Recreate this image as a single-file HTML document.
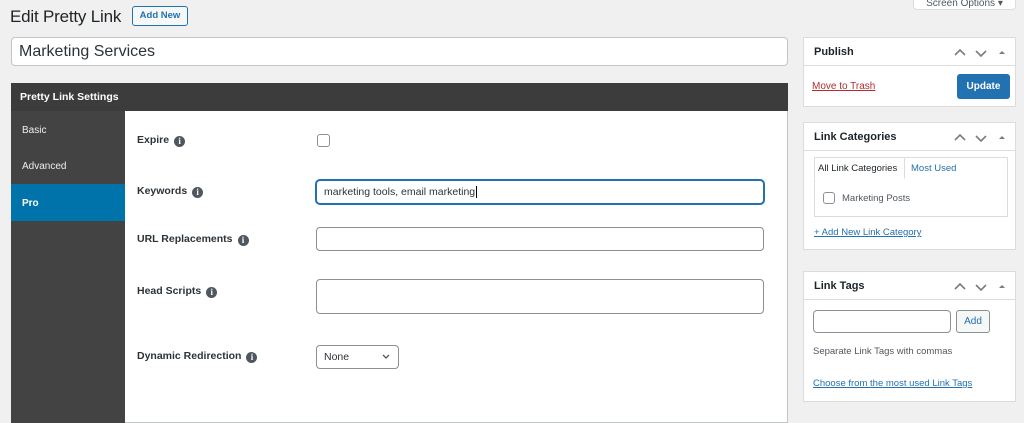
<!DOCTYPE html>
<html><head><style>
*{box-sizing:border-box;margin:0;padding:0}
body{width:1024px;height:423px;background:#f0f0f1;font-family:"Liberation Sans",sans-serif;color:#1d2327;position:relative;overflow:hidden;font-size:11px}
.a{position:absolute}
.inp{position:absolute;background:#fff;border:1px solid #8c8f94;border-radius:4px}
.lbl{position:absolute;left:137px;font-size:10.5px;font-weight:bold;color:#2c3338;white-space:nowrap}
.i{display:inline-block;width:11px;height:11px;border-radius:50%;background:#50575e;color:#fff;font-size:9px;line-height:11px;text-align:center;font-weight:bold;margin-left:5px;vertical-align:-1px;font-family:"Liberation Serif",serif}
.box{position:absolute;left:803px;width:213px;background:#fff;border:1px solid #dcdcde}
.bh{height:28px;border-bottom:1px solid #dcdcde;font-size:11px;font-weight:bold;padding:8px 10px;position:relative}
.ar{position:absolute;right:6px;top:8px}
a{color:#2271b1}
</style></head><body>
<svg width="0" height="0" style="position:absolute"><defs><g id="ar"><path d="M2 9 L7 4 L12 9" stroke="#787c82" stroke-width="1.6" fill="none"/><path d="M23 5 L28 10 L33 5" stroke="#787c82" stroke-width="1.6" fill="none"/><path d="M46 8 L49 5 L52 8 Z" fill="#787c82"/></g></defs></svg>
<div class="a" style="left:913px;top:-8px;width:103px;height:18px;background:#fff;border:1px solid #dcdcde;border-radius:0 0 4px 4px;font-size:10px;color:#50575e;text-align:center;padding-top:5px">Screen Options ▾</div>
<div class="a" style="left:10px;top:7px;font-size:17px;color:#1d2327;letter-spacing:-0.2px">Edit Pretty Link</div>
<div class="a" style="left:132px;top:6px;width:56px;height:20px;border:1px solid #2271b1;border-radius:3px;background:#f6f7f7;color:#2271b1;font-size:9.5px;text-align:center;line-height:18px;font-weight:bold">Add New</div>
<div class="inp" style="left:11px;top:37px;width:777px;height:29px;border-color:#c3c4c7;font-size:16px;padding:5px 7px;color:#2c3338">Marketing Services</div>

<div class="a" style="left:11px;top:83px;width:777px;height:340px;background:#fff;border:1px solid #c3c4c7"></div>
<div class="a" style="left:11px;top:83px;width:777px;height:28px;background:#3c3c3c;color:#fff;font-weight:bold;font-size:10.5px;padding:8px 9px">Pretty Link Settings</div>
<div class="a" style="left:11px;top:111px;width:114px;height:312px;background:#434343"></div>
<div class="a" style="left:22px;top:125px;color:#eee;font-size:10px">Basic</div>
<div class="a" style="left:22px;top:161px;color:#eee;font-size:10px">Advanced</div>
<div class="a" style="left:11px;top:184px;width:114px;height:37px;background:#0073aa;color:#fff;font-weight:bold;font-size:10px;padding:14px 11px">Pro</div>

<div class="lbl" style="top:134px">Expire<span class="i">i</span></div>
<div class="a" style="left:317px;top:134px;width:13px;height:13px;border:1px solid #8c8f94;border-radius:3px;background:#fff"></div>
<div class="lbl" style="top:185px">Keywords<span class="i">i</span></div>
<div class="inp" style="left:316px;top:180px;width:448px;height:24px;border-color:#2271b1;box-shadow:0 0 0 1px #2271b1;font-size:10.5px;padding:5px 7px;color:#2c3338">marketing tools, email marketing<span style="border-left:1px solid #000;margin-left:1px"></span></div>
<div class="lbl" style="top:233px">URL Replacements<span class="i">i</span></div>
<div class="inp" style="left:316px;top:227px;width:448px;height:24px"></div>
<div class="lbl" style="top:285px">Head Scripts<span class="i">i</span></div>
<div class="inp" style="left:316px;top:279px;width:448px;height:35px"></div>
<div class="lbl" style="top:350px">Dynamic Redirection<span class="i">i</span></div>
<div class="inp" style="left:316px;top:345px;width:83px;height:24px;border-color:#8c8f94;font-size:10.5px;padding:5px 7px;color:#2c3338">None<svg class="a" style="right:8px;top:8px" width="8" height="6"><path d="M1 1 L4 4 L7 1" stroke="#50575e" stroke-width="1.3" fill="none"/></svg></div>

<div class="box" style="top:37px;height:70px">
<div class="bh">Publish<svg class="ar" width="56" height="14"><use href="#ar"/></svg></div>
<div class="a" style="left:8px;top:43px;font-size:10px;color:#b32d2e;text-decoration:underline">Move to Trash</div>
<div class="a" style="left:153px;top:36px;width:53px;height:25px;background:#2271b1;border-radius:3px;color:#fff;font-size:10px;text-align:center;line-height:25px;font-weight:bold">Update</div>
</div>

<div class="box" style="top:122px;height:128px">
<div class="bh">Link Categories<svg class="ar" width="56" height="14"><use href="#ar"/></svg></div>
<div class="a" style="left:10px;top:34px;width:194px;height:60px;border:1px solid #dcdcde"></div>
<div class="a" style="left:10px;top:34px;width:91px;height:22px;border:1px solid #dcdcde;border-bottom:1px solid #fff;background:#fff;font-size:9.5px;padding:5px 3px;white-space:nowrap">All Link Categories</div>
<div class="a" style="left:107px;top:40px;font-size:9.5px;color:#2271b1">Most Used</div>
<div class="a" style="left:19px;top:69px;width:12px;height:12px;border:1px solid #8c8f94;border-radius:3px"></div>
<div class="a" style="left:38px;top:70px;font-size:9.5px;color:#50575e">Marketing Posts</div>
<div class="a" style="left:10px;top:104px;font-size:9.5px;color:#2271b1;text-decoration:underline">+ Add New Link Category</div>
</div>

<div class="box" style="top:271px;height:131px">
<div class="bh">Link Tags<svg class="ar" width="56" height="14"><use href="#ar"/></svg></div>
<div class="inp" style="left:9px;top:38px;width:138px;height:23px"></div>
<div class="a" style="left:152px;top:38px;width:34px;height:23px;border:1px solid #8c8f94;border-radius:3px;background:#f6f7f7;color:#2271b1;font-size:10px;text-align:center;line-height:21px">Add</div>
<div class="a" style="left:9px;top:74px;font-size:9.5px;color:#50575e">Separate Link Tags with commas</div>
<div class="a" style="left:9px;top:106px;font-size:9.5px;color:#2271b1;text-decoration:underline">Choose from the most used Link Tags</div>
</div>
</body></html>
